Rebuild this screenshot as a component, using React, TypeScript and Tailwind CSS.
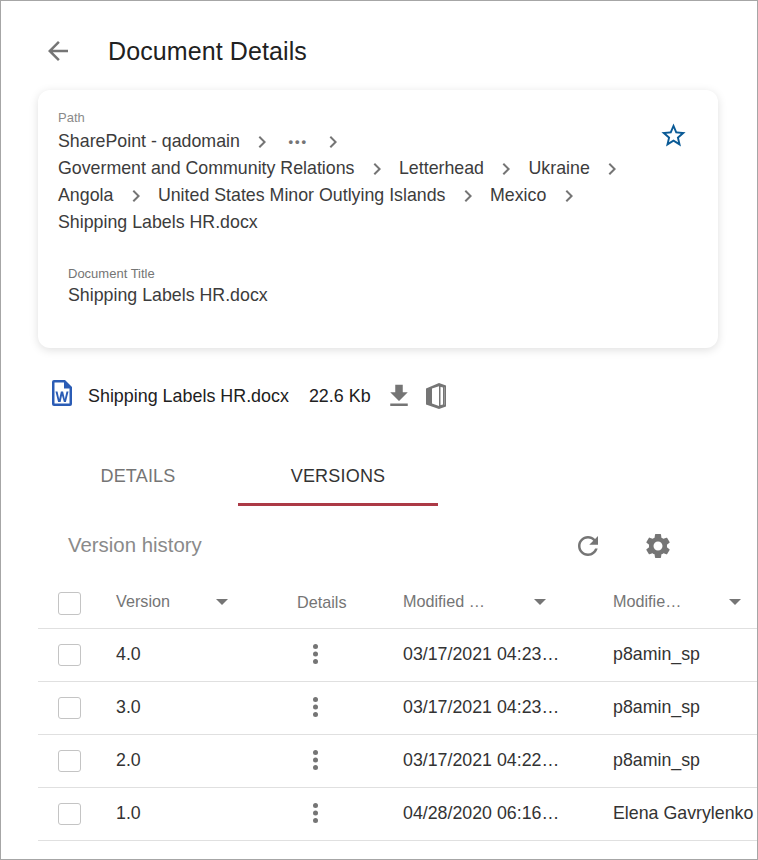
const GRAY = "#757575";

const Icon = ({ d, className, fill = GRAY }: { d: string; className: string; fill?: string }) => (
	<svg viewBox="0 0 24 24" className={className} fill={fill}>
		<path d={d} />
	</svg>
);

const backPath = "M20 11H7.83l5.59-5.59L12 4l-8 8 8 8 1.41-1.41L7.83 13H20v-2z";
const chevronPath = "M10 6L8.59 7.41 13.17 12l-4.58 4.59L10 18l6-6z";
const starPath =
	"M22 9.24l-7.19-.62L12 2 9.19 8.63 2 9.24l5.46 4.73L5.82 21 12 17.27 18.18 21l-1.63-7.03L22 9.24zM12 15.4l-3.76 2.27 1-4.28-3.32-2.88 4.38-.38L12 6.1l1.71 4.04 4.38.38-3.32 2.88 1 4.28L12 15.4z";
const downloadPath = "M19 9h-4V3H9v6H5l7 7 7-7zM5 18v2h14v-2H5z";
const refreshPath =
	"M17.65 6.35C16.2 4.9 14.21 4 12 4c-4.42 0-7.99 3.58-7.99 8s3.57 8 7.99 8c3.73 0 6.84-2.55 7.73-6h-2.08c-.82 2.33-3.04 4-5.65 4-3.31 0-6-2.69-6-6s2.69-6 6-6c1.66 0 3.14.69 4.22 1.78L13 11h7V4l-2.35 2.35z";
const settingsPath =
	"M19.14 12.94c.04-.3.06-.61.06-.94 0-.32-.02-.64-.07-.94l2.03-1.58c.18-.14.23-.41.12-.61l-1.92-3.32c-.12-.22-.37-.29-.59-.22l-2.39.96c-.5-.38-1.03-.7-1.62-.94l-.36-2.54c-.04-.24-.24-.41-.48-.41h-3.84c-.24 0-.43.17-.47.41l-.36 2.54c-.59.24-1.13.57-1.62.94l-2.39-.96c-.22-.08-.47 0-.59.22L2.74 8.87c-.12.21-.08.47.12.61l2.03 1.58c-.05.3-.09.63-.09.94s.02.64.07.94l-2.03 1.58c-.18.14-.23.41-.12.61l1.92 3.32c.12.22.37.29.59.22l2.39-.96c.5.38 1.03.7 1.62.94l.36 2.54c.05.24.24.41.48.41h3.84c.24 0 .44-.17.47-.41l.36-2.54c.59-.24 1.13-.56 1.62-.94l2.39.96c.22.08.47 0 .59-.22l1.92-3.32c.12-.22.07-.47-.12-.61l-2.01-1.58zM12 15.6c-1.98 0-3.6-1.62-3.6-3.6s1.62-3.6 3.6-3.6 3.6 1.62 3.6 3.6-1.62 3.6-3.6 3.6z";

const Chevron = () => <Icon d={chevronPath} className="mx-[10.25px] h-6 w-6 shrink-0" />;

const Crumb = ({ text }: { text: string }) => (
	<>
		<span>{text}</span>
		<Chevron />
	</>
);

const WordIcon = () => (
	<svg viewBox="0 0 20 26" className="mb-[7px] h-[26px] w-5">
		<path d="M2 0h11l7 7v17a2 2 0 0 1-2 2H2a2 2 0 0 1-2-2V2a2 2 0 0 1 2-2z" fill="#2b5cb5" />
		<path d="M2.500 2.500h9.500v6h5.500v15h-15z" fill="#fff" />
		<path d="M3.500 11.500h2l1.700 7.500 1.700-7.500h2.200l1.700 7.500 1.700-7.500h2l-2.600 10.500h-2L10 15.500 8.600 22h-2.500z" fill="#2b5cb5" />
	</svg>
);

const OfficeIcon = () => (
	<svg viewBox="0 0 20 26" className="h-[26px] w-5" fill={GRAY}>
		<path d="M0 5.500 13 0l7 2.500v21L13 26 0 21.500zM13 23V3.200L6 5.500v15z" />
		<path d="M14.500 3.500l4 .8v17.400l-4 .8z" fill="#fff" />
		<path d="M13 2.500l5.500 1.200v18.600L13 23.500v-1l4-1V4.500l-4-1z" />
	</svg>
);

const Caret = ({ className }: { className: string }) => (
	<span className={`h-0 w-0 border-x-[6px] border-t-[6px] border-x-transparent border-t-[#757575] ${className}`} />
);

const Checkbox = ({ tall = false }: { tall?: boolean }) => (
	<span className={`block w-[23px] rounded-[3px] border border-[#c4c4c4] bg-white ${tall ? "h-[23px]" : "h-[22px]"}`} />
);

const versions = [
	{ version: "4.0", date: "03/17/2021 04:23…", user: "p8amin_sp" },
	{ version: "3.0", date: "03/17/2021 04:23…", user: "p8amin_sp" },
	{ version: "2.0", date: "03/17/2021 04:22…", user: "p8amin_sp" },
	{ version: "1.0", date: "04/28/2020 06:16…", user: "Elena Gavrylenko" },
];

const rowGrid = "grid grid-cols-[78px_181px_106px_210px_160px] items-center border-b border-[#e0e0e0]";

export default function App() {
	return (
		<div className="h-[860px] w-[758px] overflow-hidden border border-[#a6a6a6] bg-white font-['Liberation_Sans',Arial,sans-serif] text-[#333]">
			<header className="flex h-[89px] items-center pl-[42px] pt-[11px]">
				<Icon d={backPath} className="h-[30px] w-[30px]" />
				<h1 className="ml-[35px] text-[25px] font-normal leading-7 tracking-[0.1px] text-[#212121]">Document Details</h1>
			</header>

			<section className="relative ml-[37px] h-[258px] w-[680px] rounded-[12px] bg-white px-5 pt-[20px] shadow-[0_2px_10px_rgba(0,0,0,0.13)]">
				<p className="text-[13px] leading-[16px] text-[#8a8a8a]">Path</p>
				<div className="mt-[2px] w-[590px] text-[17.8px] leading-[27px] text-[#3c3c3c]">
					<div className="flex items-center">
						<Crumb text="SharePoint - qadomain" />
						<span className="ml-[4px] mr-[3px] text-[13px] font-bold tracking-[2px] text-[#757575]">•••</span>
						<Chevron />
					</div>
					<div className="flex items-center">
						<Crumb text="Goverment and Community Relations" />
						<Crumb text="Letterhead" />
						<Crumb text="Ukraine" />
					</div>
					<div className="flex items-center">
						<Crumb text="Angola" />
						<Crumb text="United States Minor Outlying Islands" />
						<Crumb text="Mexico" />
					</div>
					<div>Shipping Labels HR.docx</div>
				</div>
				<div className="ml-[10px] mt-[30px]">
					<p className="text-[13px] leading-[16px] text-[#757575]">Document Title</p>
					<p className="mt-[1px] text-[17.8px] leading-[24px] text-[#3c3c3c]">Shipping Labels HR.docx</p>
				</div>
				<Icon d={starPath} fill="#0a5a96" className="absolute right-[30px] top-[31px] h-[29px] w-[29px]" />
			</section>

			<div className="ml-[51px] mt-[30px] flex h-[36px] items-center text-[17.9px] text-[#212121]">
				<WordIcon />
				<span className="ml-4">Shipping Labels HR.docx</span>
				<span className="ml-5">22.6 Kb</span>
				<Icon d={downloadPath} className="ml-[13px] h-[30px] w-[30px]" />
				<span className="ml-[12px]">
					<OfficeIcon />
				</span>
			</div>

			<nav className="ml-[37px] mt-[35px] flex h-[57px] text-[18px] tracking-[0.2px]">
				<div className="flex w-[200px] items-center justify-center border-b-[3px] border-transparent text-[#757575]">DETAILS</div>
				<div className="flex w-[200px] items-center justify-center border-b-[3px] border-[#ac3a46] text-[#333]">VERSIONS</div>
			</nav>

			<div className="ml-[67px] mt-[9px] flex h-[60px] items-center">
				<h2 className="w-[505px] text-[20.4px] font-normal text-[#8a8a8a]">Version history</h2>
				<Icon d={refreshPath} className="mt-[2px] h-[30px] w-[30px]" />
				<Icon d={settingsPath} className="ml-[40px] mt-[2px] h-[30px] w-[30px]" />
			</div>

			<div className="ml-[37px] mt-[1px] w-[735px] text-[16.2px]">
				<div className={`${rowGrid} h-[53px] text-[#757575]`}>
					<div className="pl-[20px] pt-[2px]">
						<Checkbox tall />
					</div>
					<div className="flex items-center">
						<span className="pb-[2px]">Version</span>
						<Caret className="ml-[46px]" />
					</div>
					<div>Details</div>
					<div className="flex items-center">
						<span className="pb-[2px]">Modified …</span>
						<Caret className="ml-[49px]" />
					</div>
					<div className="flex items-center">
						<span className="pb-[2px]">Modifie…</span>
						<Caret className="ml-[48px]" />
					</div>
				</div>
				{versions.map((row) => (
					<div key={row.version} className={`${rowGrid} h-[53px] text-[17.8px] text-[#333]`}>
						<div className="pl-[20px]">
							<Checkbox />
						</div>
						<div className="pb-[2px]">{row.version}</div>
						<div className="pb-[2px] pl-[16px]">
							<svg viewBox="0 0 5 20" className="h-5 w-[5px]" fill={GRAY}>
								<circle cx="2.500" cy="2.500" r="2.500" />
								<circle cx="2.500" cy="10" r="2.500" />
								<circle cx="2.500" cy="17.500" r="2.500" />
							</svg>
						</div>
						<div className="pb-[2px]">{row.date}</div>
						<div className="whitespace-nowrap pb-[2px]">{row.user}</div>
					</div>
				))}
			</div>
		</div>
	);
}
